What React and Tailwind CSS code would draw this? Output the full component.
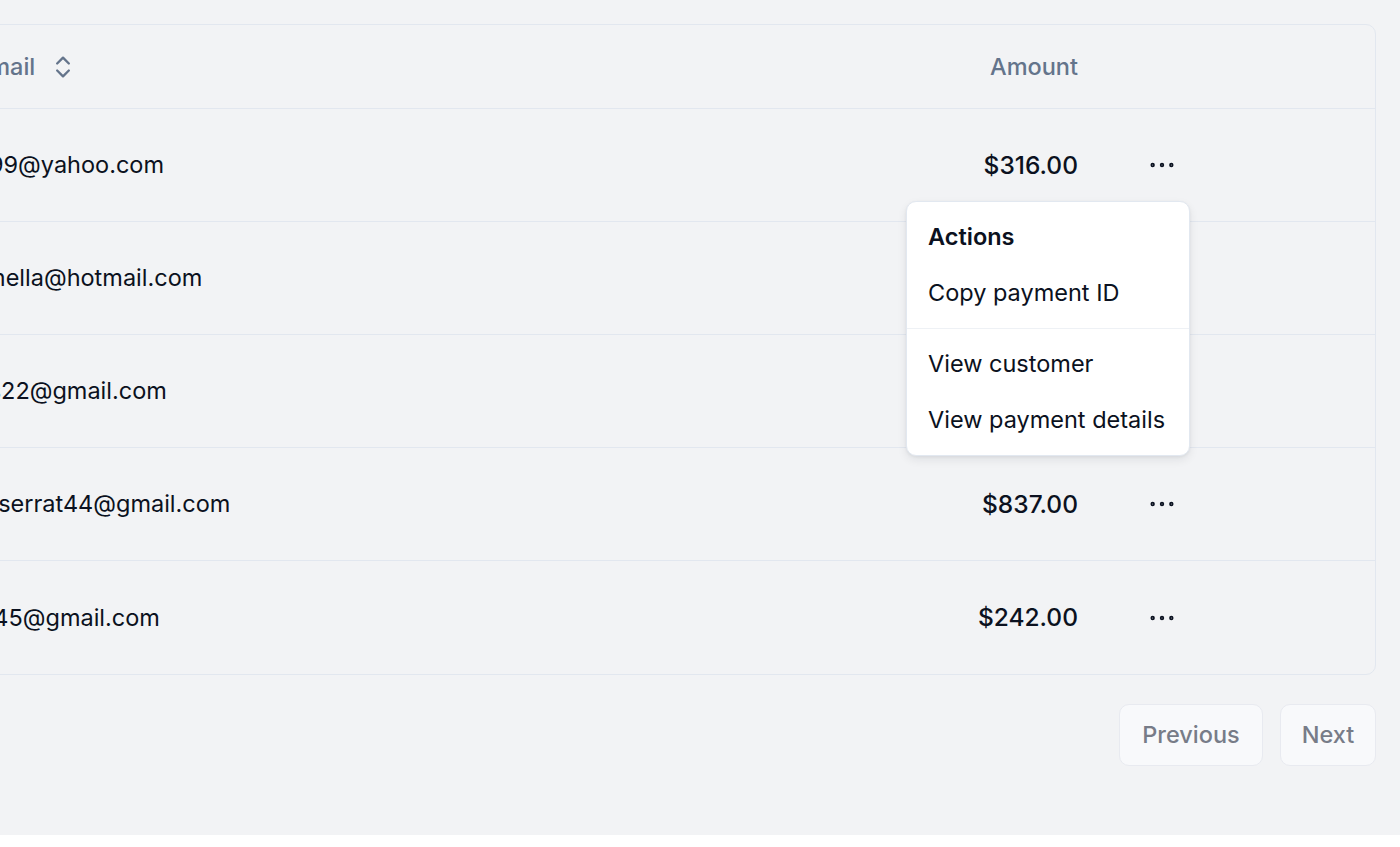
import React from 'react';
import { ChevronsUpDown, Ellipsis } from 'lucide-react';

const payments = [
  { id: 'm5gr84i9', email: 'ken99@yahoo.com', amount: 316 },
  { id: 'bhqecj4p', email: 'carmella@hotmail.com', amount: 721 },
  { id: '5kma53ae', email: 'Silas22@gmail.com', amount: 874 },
  { id: 'derv1ws0', email: 'Monserrat44@gmail.com', amount: 837 },
  { id: '3u1reuv4', email: 'Abe45@gmail.com', amount: 242 },
];

const fmt = (n) =>
  new Intl.NumberFormat('en-US', { style: 'currency', currency: 'USD' }).format(n);

const ActionsMenu = () => (
  <div className="absolute right-0 top-full mt-[8px] w-[284px] z-10 whitespace-nowrap rounded-[10px] border border-[#e2e8f0] bg-white p-[7px] shadow-[0_4px_10px_rgba(15,23,42,0.08),0_1px_3px_rgba(15,23,42,0.06)] text-left">
    <div className="px-[14px] h-[56px] flex items-center font-semibold text-[#0b1120]">Actions</div>
    <div className="px-[14px] h-[56px] flex items-center text-[#0b1120]">Copy payment ID</div>
    <div className="-mx-[7px] my-[7px] h-px bg-[#eef1f5]" />
    <div className="px-[14px] h-[56px] flex items-center text-[#0b1120]">View customer</div>
    <div className="px-[14px] h-[56px] flex items-center text-[#0b1120]">View payment details</div>
  </div>
);

export default function App() {
  return (
    <div
      className="h-[835px] overflow-hidden bg-[#f2f3f5] text-[23.5px] text-[#0b1120]"
      style={{ fontFamily: 'Inter, "Noto Sans", sans-serif' }}
    >
      <div className="ml-[-80px] pr-[24px] pt-[24px]">
        {/* Table */}
        <div className="rounded-[10px] border border-[#e2e7ef]">
          {/* Header */}
          <div className="flex h-[84px] items-center border-b border-[#e2e7ef] font-medium text-[#64748b]">
            <div className="flex-1 px-[28px]">
              <div className="flex items-center pl-[26px]">
                <span>Email</span>
                <ChevronsUpDown size={28} strokeWidth={2} className="ml-[14px]" />
              </div>
            </div>
            <div className="w-[240px] px-[28px] text-right">Amount</div>
            <div className="w-[112px]" />
            <div className="w-[157px]" />
          </div>

          {payments.map((p, i) => (
            <div
              key={p.id}
              className={`flex h-[113px] items-center whitespace-nowrap ${i < payments.length - 1 ? 'border-b border-[#e2e7ef]' : ''}`}
            >
              <div className="flex-1 px-[28px]">{p.email}</div>
              <div className="w-[240px] px-[28px] text-right text-[24.5px] font-medium">{fmt(p.amount)}</div>
              <div className="w-[112px] flex justify-center">
                <div className="relative">
                  <button className="flex h-[56px] w-[56px] items-center justify-center rounded-[10px] text-[#0b1120]">
                    <Ellipsis size={32} strokeWidth={1.3} />
                  </button>
                  {i === 0 && <ActionsMenu />}
                </div>
              </div>
              <div className="w-[157px]" />
            </div>
          ))}
        </div>

        {/* Pagination */}
        <div className="flex justify-end gap-[17px] py-[29px]">
          <button className="h-[62px] w-[144px] rounded-[10px] border border-[#e8eaf0] bg-[#f8f9fb] font-medium text-[#777c88]">
            Previous
          </button>
          <button className="h-[62px] w-[96px] rounded-[10px] border border-[#e8eaf0] bg-[#f8f9fb] font-medium text-[#777c88]">
            Next
          </button>
        </div>
      </div>
    </div>
  );
}
